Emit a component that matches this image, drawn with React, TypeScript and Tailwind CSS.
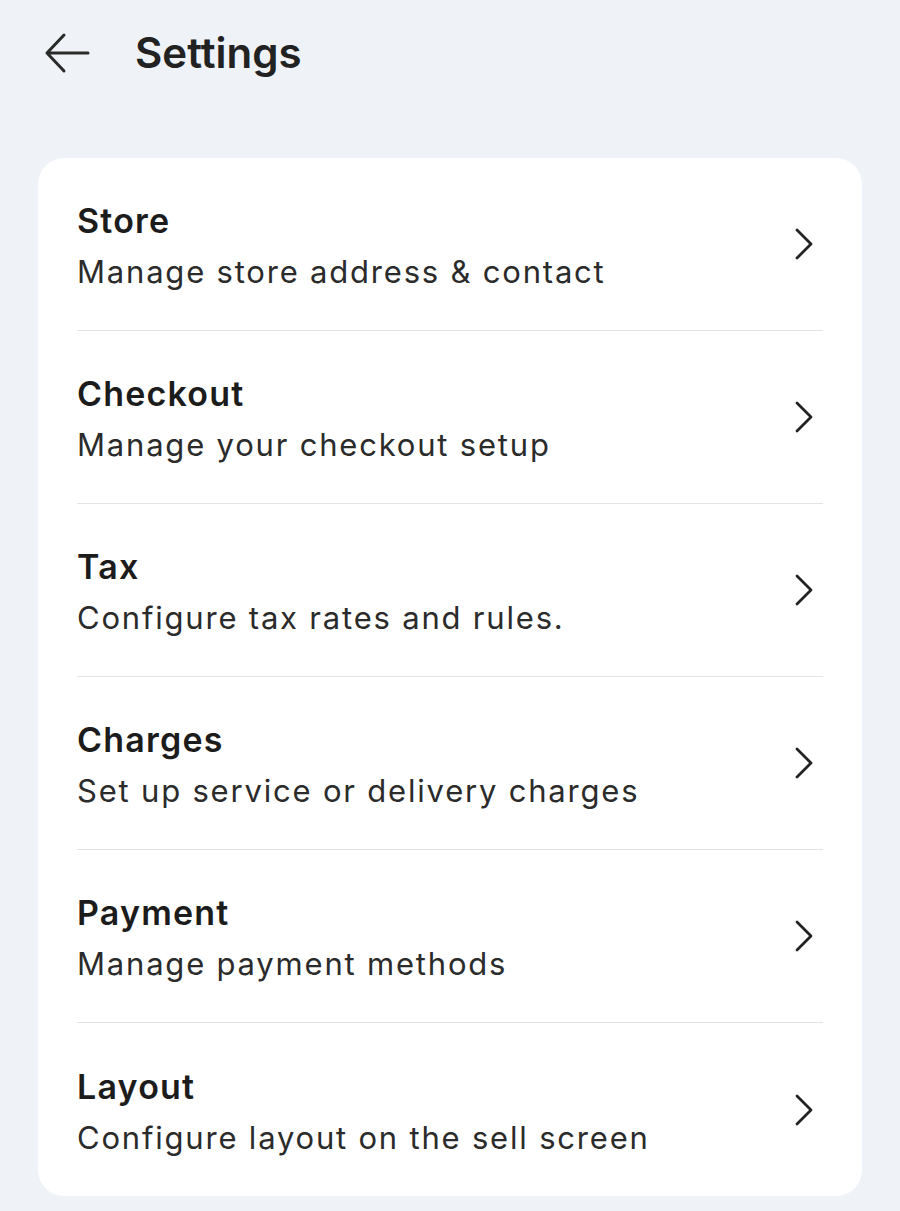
const items = [
  { title: 'Store', subtitle: 'Manage store address & contact' },
  { title: 'Checkout', subtitle: 'Manage your checkout setup' },
  { title: 'Tax', subtitle: 'Configure tax rates and rules.' },
  { title: 'Charges', subtitle: 'Set up service or delivery charges' },
  { title: 'Payment', subtitle: 'Manage payment methods' },
  { title: 'Layout', subtitle: 'Configure layout on the sell screen' },
];

function Chevron() {
  return (
    <svg width="20" height="32" viewBox="0 0 20 32" fill="none" className="text-[#222]">
      <path d="M3 2 L17 16 L3 30" stroke="currentColor" strokeWidth="2.8" strokeLinecap="round" strokeLinejoin="round" />
    </svg>
  );
}

function BackArrow() {
  return (
    <svg width="46" height="42" viewBox="0 0 46 42" fill="none" className="text-[#2a2a2a]">
      <path d="M44 21 H3 M20 3 L3 21 L20 39" stroke="currentColor" strokeWidth="3" strokeLinecap="round" strokeLinejoin="round" />
    </svg>
  );
}

export default function App() {
  return (
    <div className="min-h-[1211px] w-full bg-[#eff2f6] font-['Inter',sans-serif] text-[#1d1d1f]">
      {/* Header */}
      <div className="flex items-center h-[106px] pl-[44px]">
        <BackArrow />
        <h1 className="ml-[45px] text-[42px] font-semibold leading-none text-[#222]">Settings</h1>
      </div>

      {/* Card */}
      <div className="mx-[38px] mt-[52px] bg-white rounded-[26px] px-[39px]">
        {items.map((item, i) => (
          <div
            key={item.title}
            className={`flex items-center justify-between h-[173px] ${i < items.length - 1 ? 'border-b border-[#e3e3e3]' : ''}`}
          >
            <div className="flex flex-col pt-[7px]">
              <span className="text-[34px] leading-[40px] font-semibold tracking-[1.2px] text-[#1c1c1c]">{item.title}</span>
              <span className="mt-[9px] text-[31px] leading-[44px] tracking-[1.8px] text-[#2b2b2b]">{item.subtitle}</span>
            </div>
            <div className="mr-[9px]">
              <Chevron />
            </div>
          </div>
        ))}
      </div>
    </div>
  );
}
